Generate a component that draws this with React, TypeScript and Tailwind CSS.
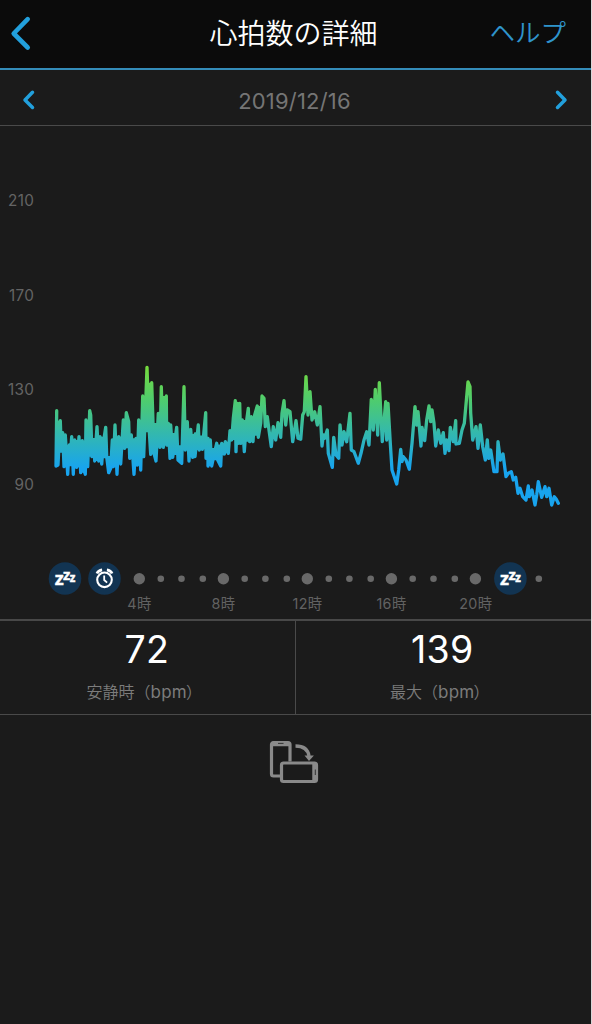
import React from "react";

type Segment = { x: number; y: number; points: string };

// Heart-rate samples, in thirds of a pixel relative to each segment's origin.
const segments: Segment[] = [
  {
    x: 50,
    y: 360,
    points:
      "20,152 18,318 24,315 31,182 34,268 38,218 42,320 46,225 53,343 58,255 61,290 65,230 70,343 74,240 80,322 87,230 92,338 97,242 100,325 106,343 108,180 113,320 119,152 122,165 126,290 131,240 134,303 141,200 146,303 150,230 155,312 160,250 167,202 170,290 176,338 182,325 187,240 190,320 195,195 201,343 206,230 212,312 220,180 224,265 229,158 236,185 239,295 244,225 252,343 258,235 262,315 266,180 272,330 278,108 281,290 291,22 297,200 302,283 305,68 312,280 318,303 325,160 330,262 334,80 340,262 349,108 350,255 355,190 360,295",
  },
  {
    x: 170,
    y: 360,
    points:
      "2,195 8,292 20,202 24,300 35,310 42,80 46,270 52,185 57,303 62,208 68,292 76,222 75,290 85,195 88,270 97,240 97,268 107,158 108,295 114,235 114,318 121,240 125,318 132,285 140,250 143,300 152,318 155,250 163,282 166,245 175,280 180,212 185,240 190,175 196,122 198,275 203,130 205,250 209,130 212,250 217,180 223,275 229,190 235,145 239,245 244,170 249,245 254,165 262,138 265,232 272,190 276,108 282,115 286,200 292,170 297,210 304,260 310,200 317,240 324,188 332,232 336,160 342,122 347,195 352,150",
  },
  {
    x: 290,
    y: 360,
    points:
      "0,155 8,245 18,182 24,235 32,238 38,165 43,155 48,50 54,165 60,95 66,180 74,155 82,195 90,140 96,258 100,225 104,235 112,210 115,280 127,322 131,232 138,285 146,295 150,195 156,255 162,215 170,245 180,160 184,270 192,275 205,310 213,280 222,240 230,215 237,255 244,118 250,210 256,88 263,225 268,68 277,245 287,125 290,240 294,130 301,250 306,330 320,372 326,330 332,268 336,305 340,290 348,300 358,328 366,250 375,140 380,195 384,155",
  },
  {
    x: 420,
    y: 370,
    points:
      "3,228 6,172 14,212 20,150 27,108 32,155 36,120 42,160 47,228 55,180 62,220 70,188 75,250 80,210 87,242 91,172 100,215 107,152 108,222 118,220 126,180 133,160 144,36 150,50 152,130 158,210 168,170 174,235 181,165 188,230 196,270 202,210 206,265 212,240 222,305 231,305 234,215 241,270 249,252 258,320 265,310 274,305 280,330 287,322 294,370 300,355 308,380 318,390 325,348 328,380 336,360 345,405 350,375 355,335 365,382 375,350 380,380 387,355 395,405 403,380 409,388 415,400",
  },
];

const CHART_TOP = 126;

const samples = segments.flatMap(({ x, y, points }) =>
  points.split(" ").map((pair) => {
    const [px, py] = pair.split(",").map(Number);
    return [x + px / 3, y - CHART_TOP + py / 3] as const;
  }),
);

const trace = samples.map(([x, y]) => `${x.toFixed(1)},${y.toFixed(1)}`).join(" ");

// The band between the upper and lower contour of the trace: notches narrower
// than the window are closed, while single spikes keep their shape.
const STEP = 0.25;
const START = 56.25;
const COLUMNS = Math.floor((558 - START) / STEP);

function buildBand(): string {
  const top = new Array<number>(COLUMNS).fill(Infinity);
  const bottom = new Array<number>(COLUMNS).fill(-Infinity);
  for (let i = 0; i < samples.length - 1; i++) {
    const [ax, ay] = samples[i];
    const [bx, by] = samples[i + 1];
    const parts = 40;
    for (let k = 0; k <= parts; k++) {
      const t = k / parts;
      const c = Math.round((ax + (bx - ax) * t - START) / STEP);
      if (c < 0 || c >= COLUMNS) continue;
      const y = ay + (by - ay) * t;
      top[c] = Math.min(top[c], y);
      bottom[c] = Math.max(bottom[c], y);
    }
  }
  const filter = (values: number[], pick: (...v: number[]) => number) =>
    values.map((_, c) => {
      const half = c * STEP + START < 262 ? 9 : 6;
      return pick(...values.slice(Math.max(0, c - half), c + half + 1));
    });
  const upper = filter(filter(top, Math.min), Math.max);
  const lower = filter(filter(bottom, Math.max), Math.min);
  const at = (y: number, c: number) => `${(START + c * STEP).toFixed(2)},${y.toFixed(1)}`;
  return [...upper.map(at), ...lower.map(at).reverse()].join(" ");
}

const band = buildBand();

const cjk = "font-['Inter','Noto_Sans_CJK_JP',sans-serif]";

function Chevron({ className, d, width }: { className: string; d: string; width: number }) {
  return (
    <svg className={className} fill="none" stroke="#22a0dc" strokeWidth={width} strokeLinecap="round" strokeLinejoin="round">
      <path d={d} />
    </svg>
  );
}

function HeartChart() {
  return (
    <svg className="block h-[424px] w-full" viewBox="0 0 591 424">
      <defs>
        <linearGradient id="bpm" gradientUnits="userSpaceOnUse" x1="0" y1="240" x2="0" y2="342">
          <stop offset="0" stopColor="#76dc3c" />
          <stop offset="0.35" stopColor="#4dcb70" />
          <stop offset="0.65" stopColor="#34b9ac" />
          <stop offset="1" stopColor="#18a4ee" />
        </linearGradient>
      </defs>
      <g fill="#646464" fontSize="15.3" fontFamily="Inter, sans-serif" textAnchor="end" letterSpacing="0.3">
        <text x="34.2" y="79.5">210</text>
        <text x="34.2" y="174.5">170</text>
        <text x="34.2" y="269">130</text>
        <text x="34.2" y="363.5">90</text>
      </g>
      <polygon points={band} fill="url(#bpm)" />
      <polyline points={trace} fill="none" stroke="url(#bpm)" strokeWidth="3.3" strokeLinecap="round" strokeLinejoin="round" />
    </svg>
  );
}

function SleepBadge({ x }: { x: number }) {
  return (
    <g>
      <circle cx={x} cy="28.5" r="16.3" fill="#123452" />
      <g fill="#fff" stroke="#fff" strokeWidth="0.4" fontFamily="'Open Sans', sans-serif" fontWeight="700">
        <text x={x - 10.3} y="34.5" fontSize="18.5">z</text>
        <text x={x - 2} y="30.3" fontSize="15">z</text>
        <text x={x + 4.8} y="32" fontSize="11.5">z</text>
      </g>
    </g>
  );
}

const dots: [number, boolean][] = [
  [139.3, true], [160.8, false], [181.5, false], [202.8, false],
  [223.4, true], [244.7, false], [265.4, false], [286.8, false],
  [307.3, true], [328.8, false], [349.4, false], [370.7, false],
  [391.4, true], [412.7, false], [433.5, false], [454.8, false],
  [475.4, true], [538.8, false],
];

function Timeline() {
  return (
    <svg className="block h-[69px] w-full" viewBox="0 0 591 69">
      <SleepBadge x={65} />
      <circle cx="104.5" cy="28.5" r="16.3" fill="#123452" />
      <g fill="none" stroke="#fff">
        <circle cx="104.5" cy="29.8" r="7.3" strokeWidth="2.1" />
        <path d="M104.2 25.5v4.5l2.9 2.7" strokeWidth="1.8" />
        <path d="M96.9 23.6c.9-2.2 2.5-3.4 5.2-3.7M106.9 19.9c2.7.3 4.3 1.5 5.2 3.7" strokeWidth="2.7" />
      </g>
      {dots.map(([x, large]) => (
        <circle key={x} cx={x} cy="28.7" r={large ? 5.7 : 3.3} fill="#696969" />
      ))}
      <SleepBadge x={510.4} />
      <g fill="#626262" fontSize="14.3" fontFamily="Inter, 'Noto Sans CJK JP', sans-serif" textAnchor="middle" letterSpacing="0.4">
        <text x="139.5" y="59">4時</text>
        <text x="223.5" y="59">8時</text>
        <text x="307.5" y="59">12時</text>
        <text x="391.5" y="59">16時</text>
        <text x="475.8" y="59">20時</text>
      </g>
    </svg>
  );
}

function Stat({ value, unit, label }: { value: string; unit: string; label: string }) {
  return (
    <div className="flex flex-1 flex-col items-center pt-[9px] pr-[3px]">
      <div className="pl-px text-[37.5px] leading-10 font-[380] tracking-[0.2px] text-white">{value}</div>
      <div className="mt-[10px] flex text-[16px] leading-6 font-[350] whitespace-nowrap text-[#7c7c7c]">
        <span className="-ml-1">{label}（</span>
        <span className="text-[17px] font-normal tracking-[0.3px]">{unit}</span>
        <span className="-ml-px">）</span>
      </div>
    </div>
  );
}

function RotateIcon() {
  return (
    <svg className="h-[46px] w-[52px]" viewBox="0 0 52 46" fill="none" stroke="#8a8a8a">
      <path d="M12 36H5.5a2 2 0 0 1-2-2V4.500a2 2 0 0 1 2-2H20a2 2 0 0 1 2 2v17" strokeWidth="3.2" />
      <path d="M4 4h17" strokeWidth="4.5" />
      <path d="M10 3.4h5.5" stroke="#333" strokeWidth="1" />
      <rect x="13.5" y="23" width="35" height="18.5" rx="2" strokeWidth="3.2" />
      <path d="M46.5 23v18.5" strokeWidth="4.5" />
      <path d="M47.3 29.5v5.5" stroke="#333" strokeWidth="1" />
      <path d="M27.5 6c7.5 0 12.5 3.5 13.5 10" strokeWidth="3.4" />
      <path d="M36.5 15.5h9.4L41 21z" fill="#8a8a8a" stroke="none" />
    </svg>
  );
}

export default function App() {
  return (
    <div className="flex h-[1024px] w-[592px] overflow-hidden border-r border-[#d8d8d8] bg-[#1b1b1b]">
      <div className={`flex w-full flex-col ${cjk}`}>
        <header className="grid h-[70px] grid-cols-[1fr_auto_1fr] items-center border-b-2 border-[#348cb9] bg-[#0b0b0b]">
          <Chevron className="ml-2 h-10 w-7" d="M19.7 5.2 5.7 19.5l14 14" width={4.6} />
          <h1 className="pr-1 pb-px text-[28px] leading-10 font-[350] text-white">心拍数の詳細</h1>
          <a className="justify-self-end pr-[25px] pb-[2px] text-[25.5px] leading-10 font-[350] text-[#2f94cb]">ヘルプ</a>
        </header>
        <nav className="flex h-14 items-center justify-between border-b border-[#4a4a4a] px-5 pt-1">
          <Chevron className="h-6 w-5" d="M12.500 4.300 5 12l7.500 7.500" width={3.5} />
          <span className="pt-[3px] pr-[2px] text-[22px] tracking-[0.2px] text-[#757575]">2019/12/16</span>
          <Chevron className="h-6 w-5" d="M6.500 4.300 14 12l-7.500 7.500" width={3.5} />
        </nav>
        <section className="flex h-[495px] flex-col border-b-2 border-[#484848]">
          <HeartChart />
          <Timeline />
        </section>
        <section className="flex h-[94px] border-b border-[#4a4a4a]">
          <Stat value="72" label="安静時" unit="bpm" />
          <div className="-ml-px w-px bg-[#4a4a4a]" />
          <Stat value="139" label="最大" unit="bpm" />
        </section>
        <div className="flex justify-center pt-[25px] pr-1">
          <RotateIcon />
        </div>
      </div>
    </div>
  );
}
